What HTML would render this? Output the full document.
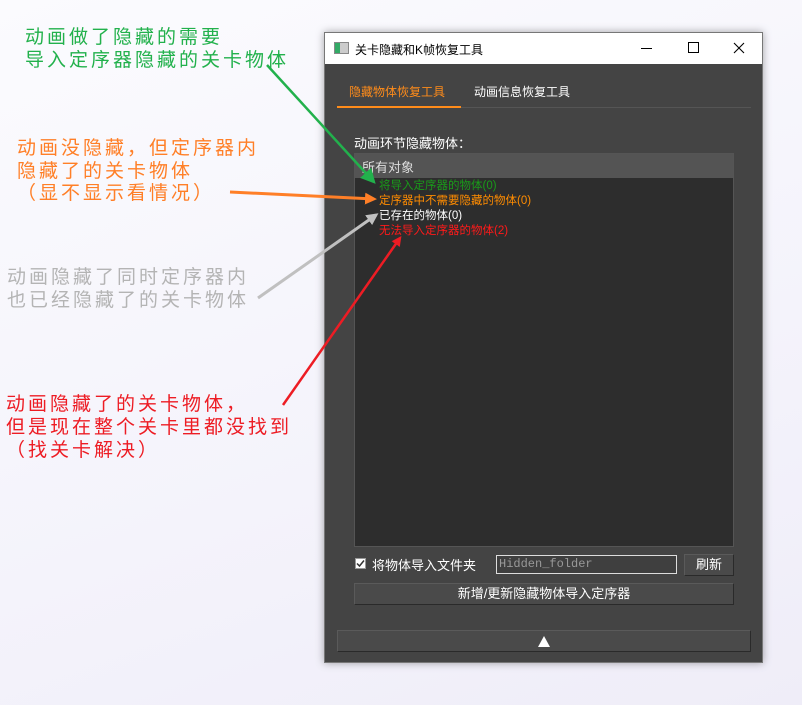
<!DOCTYPE html>
<html><head><meta charset="utf-8"><style>
*{margin:0;padding:0;box-sizing:border-box}
body{width:802px;height:705px;overflow:hidden;position:relative;background:linear-gradient(160deg,#fbfbfe 0%,#f4f3fb 60%,#efedf8 100%);font-family:"Liberation Sans","Noto Sans CJK SC",sans-serif}
.a{position:absolute;white-space:nowrap;font-family:"Liberation Sans","Noto Sans CJK SC",sans-serif}
.win{position:absolute;left:324px;top:32px;width:439px;height:631px;background:#444;border:1px solid #777;box-shadow:0 0 8px rgba(0,0,0,.35)}
.tb{position:absolute;left:0;top:0;width:437px;height:31px;background:#fff;color:#000;font-size:12px}
.ab{position:absolute;font-size:12px;color:#fff;white-space:nowrap}
.btn{position:absolute;background:#4a4a4a;border:1px solid #2a2a2a;border-top-color:#5a5a5a;border-left-color:#5a5a5a;color:#fff;font-size:13px;text-align:center}
</style></head><body>
<div class="a" style="left:25px;top:26px;font-size:19px;letter-spacing:3px;line-height:23px;color:#22b14c">动画做了隐藏的需要<br>导入定序器隐藏的关卡物体</div>
<div class="a" style="left:17px;top:138px;font-size:19px;letter-spacing:3px;line-height:22.5px;color:#ff7f27">动画没隐藏，但定序器内<br>隐藏了的关卡物体<br>（显不显示看情况）</div>
<div class="a" style="left:7px;top:266px;font-size:19px;letter-spacing:3px;line-height:23px;color:#b4b4b4">动画隐藏了同时定序器内<br>也已经隐藏了的关卡物体</div>
<div class="a" style="left:6px;top:393px;font-size:19px;letter-spacing:3px;line-height:23px;color:#ed1c24">动画隐藏了的关卡物体，<br>但是现在整个关卡里都没找到<br>（找关卡解决）</div>

<div class="win">
 <div class="tb">
  <div style="position:absolute;left:9px;top:9px;width:15px;height:12px;border:1px solid #888;background:linear-gradient(90deg,#3a6 0 40%,#ccc 40%)"></div>
  <div style="position:absolute;left:30px;top:8px">关卡隐藏和K帧恢复工具</div>
  <div style="position:absolute;left:316px;top:15px;width:11px;height:1px;background:#000"></div>
  <div style="position:absolute;left:363px;top:9px;width:11px;height:11px;border:1px solid #000"></div>
  <svg style="position:absolute;left:408px;top:9px" width="12" height="12"><path d="M1 1L11 11M11 1L1 11" stroke="#000" stroke-width="1.1"/></svg>
 </div>
 <div class="ab" style="left:24px;top:50px;color:#ff8c1a">隐藏物体恢复工具</div>
 <div class="ab" style="left:149px;top:50px">动画信息恢复工具</div>
 <div style="position:absolute;left:12px;top:73px;width:124px;height:2px;background:#ff8c1a"></div>
 <div style="position:absolute;left:136px;top:74px;width:290px;height:1px;background:#555"></div>
 <div class="ab" style="left:29px;top:100px;font-size:13px">动画环节隐藏物体：</div>
 <div style="position:absolute;left:29px;top:120px;width:380px;height:394px;background:#2d2d2d;border:1px solid #555">
  <div style="height:24px;background:#545454;color:#ddd;font-size:13px;padding:3px 0 0 7px">所有对象</div>
  <div style="position:absolute;left:24px;top:25px;font-size:11.5px;line-height:15px;white-space:nowrap">
   <div style="color:#1a9a1a">将导入定序器的物体(0)</div>
   <div style="color:#ff8c00">定序器中不需要隐藏的物体(0)</div>
   <div style="color:#fff">已存在的物体(0)</div>
   <div style="color:#ff1a1a">无法导入定序器的物体(2)</div>
  </div>
 </div>
 <div style="position:absolute;left:30px;top:525px;width:11px;height:11px;background:#fff;border:1px solid #999"><svg width="9" height="9" style="position:absolute;left:0;top:0"><path d="M1 4.5L3.5 7L8 1.5" stroke="#333" stroke-width="1.5" fill="none"/></svg></div>
 <div class="ab" style="left:47px;top:522px;font-size:13px">将物体导入文件夹</div>
 <div style="position:absolute;left:171px;top:522px;width:181px;height:19px;border:1px solid #ddd;background:#3f3f3f;color:#999;font-family:'Liberation Mono',monospace;font-size:12px;padding:1px 2px">Hidden_folder</div>
 <div class="btn" style="left:359px;top:521px;width:50px;height:22px;line-height:20px">刷新</div>
 <div class="btn" style="left:29px;top:550px;width:380px;height:22px;line-height:20px">新增/更新隐藏物体导入定序器</div>
 <div class="btn" style="left:12px;top:597px;width:414px;height:22px"><svg width="14" height="12" style="margin-top:5px"><path d="M7 0L13 11H1Z" fill="#fff"/></svg></div>
</div>

<svg style="position:absolute;left:0;top:0" width="802" height="705">
 <defs>
  <marker id="g" markerWidth="6" markerHeight="6" refX="5" refY="3" orient="auto" markerUnits="strokeWidth"><path d="M0 0L6 3L0 6Z" fill="#22b14c"/></marker>
  <marker id="o" markerWidth="4" markerHeight="4" refX="3" refY="2" orient="auto" markerUnits="strokeWidth"><path d="M0 0L4 2L0 4Z" fill="#ff7f27"/></marker>
  <marker id="s" markerWidth="4" markerHeight="4" refX="3" refY="2" orient="auto" markerUnits="strokeWidth"><path d="M0 0L4 2L0 4Z" fill="#c0c0c0"/></marker>
  <marker id="r" markerWidth="4" markerHeight="4" refX="3" refY="2" orient="auto" markerUnits="strokeWidth"><path d="M0 0L4 2L0 4Z" fill="#ed1c24"/></marker>
 </defs>
 <line x1="267" y1="65" x2="374" y2="182" stroke="#22b14c" stroke-width="2.5" marker-end="url(#g)"/>
 <line x1="230" y1="192" x2="374" y2="199" stroke="#ff7f27" stroke-width="3" marker-end="url(#o)"/>
 <line x1="258" y1="298" x2="376" y2="215" stroke="#c0c0c0" stroke-width="3" marker-end="url(#s)"/>
 <line x1="283" y1="405" x2="400" y2="238" stroke="#ed1c24" stroke-width="2.5" marker-end="url(#r)"/>
</svg>
</body></html>
